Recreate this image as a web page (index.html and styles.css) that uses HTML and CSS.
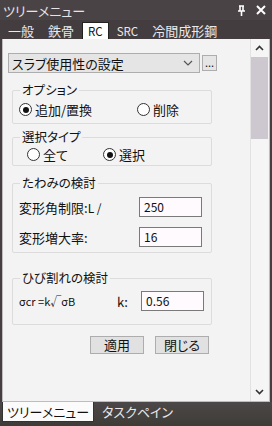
FILE: index.html
```html
<!DOCTYPE html>
<html lang="ja">
<head>
    <meta charset="UTF-8">
    <title>ツリーメニュー</title>
    <link rel="stylesheet" href="styles.css">
</head>
<body>
    <div class="window">
        <div class="titlebar">
            <span class="title">ツリーメニュー</span>
            <span class="pin">
                <svg width="9" height="11" viewBox="0 0 9 11"><path d="M2 1h5M3 1v5M6 1v5M1 6h7M4.5 6v5" stroke="#fff" stroke-width="1.6" fill="none"/></svg>
            </span>
            <span class="close">
                <svg width="10" height="10" viewBox="0 0 10 10"><path d="M1 1l8 8M9 1l-8 8" stroke="#fff" stroke-width="2" fill="none"/></svg>
            </span>
        </div>

        <div class="tabs">
            <span class="tab">一般</span>
            <span class="tab">鉄骨</span>
            <span class="tab active latin">RC</span>
            <span class="tab latin">SRC</span>
            <span class="tab">冷間成形鋼</span>
        </div>

        <div class="panel">
            <div class="content">
                <div class="combo-row">
                    <div class="combo">
                        <span>スラブ使用性の設定</span>
                        <svg width="10" height="6" viewBox="0 0 10 6"><path d="M1 1l4 4 4-4" stroke="#555" stroke-width="1.2" fill="none"/></svg>
                    </div>
                    <div class="more">...</div>
                </div>

                <fieldset class="group g-option">
                    <legend>オプション</legend>
                    <div class="radios">
                        <label class="radio wide"><span class="dot checked"></span>追加/置換</label>
                        <label class="radio"><span class="dot"></span>削除</label>
                    </div>
                </fieldset>

                <fieldset class="group g-type">
                    <legend>選択タイプ</legend>
                    <div class="radios indent">
                        <label class="radio mid"><span class="dot"></span>全て</label>
                        <label class="radio"><span class="dot checked"></span>選択</label>
                    </div>
                </fieldset>

                <fieldset class="group g-defl">
                    <legend>たわみの検討</legend>
                    <div class="field">
                        <span class="label">変形角制限:<small>L /</small></span>
                        <span class="input">250</span>
                    </div>
                    <div class="field">
                        <span class="label">変形増大率:</span>
                        <span class="input">16</span>
                    </div>
                </fieldset>

                <fieldset class="group g-crack">
                    <legend>ひび割れの検討</legend>
                    <div class="field">
                        <span class="formula">σcr =k√σB</span>
                        <span class="klabel">k:</span>
                        <span class="input">0.56</span>
                    </div>
                </fieldset>

                <div class="buttons">
                    <span class="btn">適用</span>
                    <span class="btn">閉じる</span>
                </div>
            </div>

            <div class="scrollbar">
                <svg class="arrow" width="9" height="6" viewBox="0 0 9 6"><path d="M1 5l3.5-3.5L8 5" stroke="#333" stroke-width="1.6" fill="none"/></svg>
                <div class="thumb"></div>
                <div class="track"></div>
                <svg class="arrow" width="9" height="6" viewBox="0 0 9 6"><path d="M1 1l3.5 3.5L8 1" stroke="#333" stroke-width="1.6" fill="none"/></svg>
            </div>
        </div>

        <div class="bottom">
            <span class="btab active">ツリーメニュー</span>
            <span class="btab">タスクペイン</span>
        </div>
    </div>
</body>
</html>
```

FILE: styles.css
```css
body {
    margin: 0;
    font-family: "Noto Sans CJK JP", "Liberation Sans", sans-serif;
    font-feature-settings: "palt";
    font-size: 12px;
    color: #111;
    background-color: #453f42;
}

.window {
    width: 272px;
    height: 426px;
    display: flex;
    flex-direction: column;
    background-color: #453f42;
}

.titlebar {
    height: 20px;
    display: flex;
    align-items: center;
    padding: 0 6px 0 3px;
    color: #e8e4e6;
    background-color: #4a4346;
}

.title {
    flex: 1;
    font-size: 13px;
}

.pin {
    display: flex;
    margin-right: 10px;
}

.close {
    display: flex;
}

.tabs {
    height: 19px;
    display: flex;
    align-items: flex-end;
    padding-left: 2px;
    background-color: #433d3f;
}

.tab {
    height: 16px;
    line-height: 16px;
    padding: 0 6px;
    margin-right: 2px;
    font-size: 13px;
    color: #ece8ea;
}

.tab.latin {
    font-size: 11.5px;
}

.tab.active {
    background-color: #fff;
    color: #111;
    border: 1px solid #222;
    border-bottom: none;
    padding: 0 5px;
}

.panel {
    height: 363px;
    margin: 0 2px;
    display: flex;
    background-color: #f3f3f3;
    border: 1px solid #bdbdbd;
    border-top: none;
    box-sizing: border-box;
}

.content {
    flex: 1;
    padding: 14px 0 0 5px;
}

.combo-row {
    display: flex;
    align-items: center;
}

.combo {
    width: 192px;
    height: 20px;
    display: flex;
    align-items: center;
    justify-content: space-between;
    padding: 0 6px 0 3px;
    box-sizing: border-box;
    border: 1px solid #adadad;
    background-color: #e5e5e5;
    font-size: 13px;
}

.more {
    width: 15px;
    height: 16px;
    margin-left: 2px;
    line-height: 13px;
    text-align: center;
    box-sizing: border-box;
    border: 1px solid #adadad;
    background-color: #e5e5e5;
    font-size: 11px;
}

.group {
    width: 200px;
    margin: 0 0 0 4px;
    padding: 0 6px;
    box-sizing: border-box;
    border: 1px solid #dcdcdc;
    border-radius: 2px;
}

.group legend {
    padding: 0 2px;
    margin-left: 1px;
    font-size: 12.5px;
    line-height: 14px;
}

.g-option {
    margin-top: 10px;
    height: 41px;
}

.g-type {
    margin-top: 6px;
    height: 36px;
}

.g-defl {
    margin-top: 10px;
    height: 77px;
}

.g-crack {
    margin-top: 18px;
    height: 54px;
}

.radios {
    display: flex;
    align-items: center;
    margin-top: 3px;
}

.radios.indent {
    margin-top: 1px;
    padding-left: 8px;
}

.radio {
    display: flex;
    align-items: center;
    font-size: 13px;
}

.radio.wide {
    width: 118px;
}

.radio.mid {
    width: 76px;
}

.dot {
    width: 11px;
    height: 11px;
    border: 1px solid #333;
    border-radius: 50%;
    background-color: #fff;
    margin-right: 3px;
    position: relative;
}

.dot.checked::after {
    content: "";
    position: absolute;
    left: 2.5px;
    top: 2.5px;
    width: 6px;
    height: 6px;
    border-radius: 50%;
    background-color: #111;
}

.field {
    display: flex;
    align-items: center;
    margin-top: 10px;
}

.field:first-of-type {
    margin-top: 7px;
}

.label {
    width: 120px;
    font-size: 13px;
}

.label small {
    font-size: 12px;
}

.input {
    width: 63px;
    height: 20px;
    line-height: 18px;
    padding-left: 4px;
    box-sizing: border-box;
    border: 1px solid #7a7a7a;
    background-color: #fefafd;
    font-size: 12px;
}

.formula {
    width: 98px;
    font-size: 11px;
}

.klabel {
    width: 24px;
    font-size: 13px;
}

.g-crack .field {
    margin-top: 6px;
}

.buttons {
    display: flex;
    margin: 11px 0 0 82px;
}

.btn {
    width: 54px;
    height: 18px;
    line-height: 16px;
    margin-right: 11px;
    text-align: center;
    box-sizing: border-box;
    border: 1px solid #adadad;
    background-color: #e1e1e1;
    font-size: 13px;
}

.scrollbar {
    width: 17px;
    margin-right: 1px;
    display: flex;
    flex-direction: column;
    align-items: center;
    border-left: 1px solid #e2e2e2;
    background-color: #f5f5f5;
}

.arrow {
    margin: 6px 0;
}

.thumb {
    width: 17px;
    height: 82px;
    background-color: #cdc7d0;
}

.track {
    flex: 1;
}

.bottom {
    height: 24px;
    display: flex;
    align-items: flex-start;
    padding-left: 2px;
    background: linear-gradient(#4c4748, #3e3c37);
}

.btab {
    height: 19px;
    line-height: 19px;
    padding: 0 5px;
    margin-right: 3px;
    font-size: 13px;
    color: #ece8ea;
}

.btab.active {
    background-color: #fbfbfb;
    color: #111;
    border: 1px solid #333;
    border-top: none;
    padding: 0 4px;
}
```
